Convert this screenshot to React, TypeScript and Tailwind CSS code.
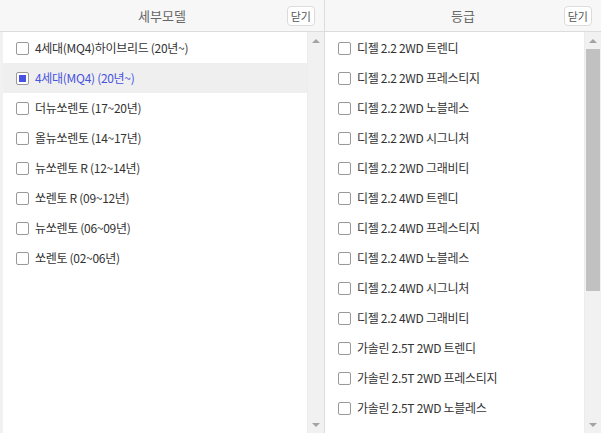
import React from 'react';

const models = [
    '4세대(MQ4)하이브리드 (20년~)',
    '4세대(MQ4) (20년~)',
    '더뉴쏘렌토 (17~20년)',
    '올뉴쏘렌토 (14~17년)',
    '뉴쏘렌토 R (12~14년)',
    '쏘렌토 R (09~12년)',
    '뉴쏘렌토 (06~09년)',
    '쏘렌토 (02~06년)',
];

const grades = [
    '디젤 2.2 2WD 트렌디',
    '디젤 2.2 2WD 프레스티지',
    '디젤 2.2 2WD 노블레스',
    '디젤 2.2 2WD 시그니처',
    '디젤 2.2 2WD 그래비티',
    '디젤 2.2 4WD 트렌디',
    '디젤 2.2 4WD 프레스티지',
    '디젤 2.2 4WD 노블레스',
    '디젤 2.2 4WD 시그니처',
    '디젤 2.2 4WD 그래비티',
    '가솔린 2.5T 2WD 트렌디',
    '가솔린 2.5T 2WD 프레스티지',
    '가솔린 2.5T 2WD 노블레스',
];

const Header = ({ title }: { title: string }) => (
    <div className="relative flex h-[32px] items-center justify-center border-b border-[#dcdcdc] bg-[#f7f7f7]">
        <span className="text-[13px] text-[#666]">{title}</span>
        <button className="absolute right-[9px] top-[6px] h-[20px] rounded-[4px] border border-[#dcdcdc] bg-white px-[3px] text-[11px] leading-[18px] text-[#555]">
            닫기
        </button>
    </div>
);

const Scrollbar = ({ thumb }: { thumb?: boolean }) => (
    <div className="flex w-[17px] shrink-0 flex-col border-l border-[#ececec] bg-[#f1f1f1]">
        <div className="flex h-[17px] items-center justify-center">
            <div className="h-0 w-0 border-x-[4px] border-b-[4px] border-x-transparent border-b-[#a3a3a3]" />
        </div>
        <div className="flex-1 px-[1px]">
            {thumb && <div className="h-[242px] bg-[#c1c1c1]" />}
        </div>
        <div className="flex h-[17px] items-center justify-center">
            <div className="h-0 w-0 border-x-[4px] border-t-[4px] border-x-transparent border-t-[#a3a3a3]" />
        </div>
    </div>
);

const Row = ({ label, checked }: { label: string; checked?: boolean }) => (
    <div className={`flex h-[30px] items-center pl-[13px] ${checked ? 'bg-[#efefef]' : ''}`}>
        <span className="flex h-[13px] w-[13px] items-center justify-center rounded-[2px] border border-[#999] bg-white">
            {checked && <span className="h-[7px] w-[7px] bg-[#4752e0]" />}
        </span>
        <span className={`ml-[6px] whitespace-nowrap text-[12px] tracking-[-0.3px] ${checked ? 'text-[#4752e0]' : 'text-[#333]'}`}>
            {label}
        </span>
    </div>
);

export default function App() {
    return (
        <div
            className="flex h-[433px] w-[601px] overflow-hidden bg-white"
            style={{ fontFamily: '"Noto Sans CJK KR", "Noto Sans", sans-serif' }}
        >
            <div className="flex w-[325px] flex-col border-r border-[#dcdcdc]">
                <Header title="세부모델" />
                <div className="flex min-h-0 flex-1">
                    <div className="flex-1 border-l-[3px] border-[#f1f1f1] pt-[1px]">
                        {models.map((m, i) => (
                            <Row key={m} label={m} checked={i === 1} />
                        ))}
                    </div>
                    <Scrollbar />
                </div>
            </div>
            <div className="flex flex-1 flex-col">
                <Header title="등급" />
                <div className="flex min-h-0 flex-1">
                    <div className="flex-1 overflow-hidden pt-[1px]">
                        {grades.map((g) => (
                            <Row key={g} label={g} />
                        ))}
                    </div>
                    <Scrollbar thumb />
                </div>
            </div>
        </div>
    );
}
